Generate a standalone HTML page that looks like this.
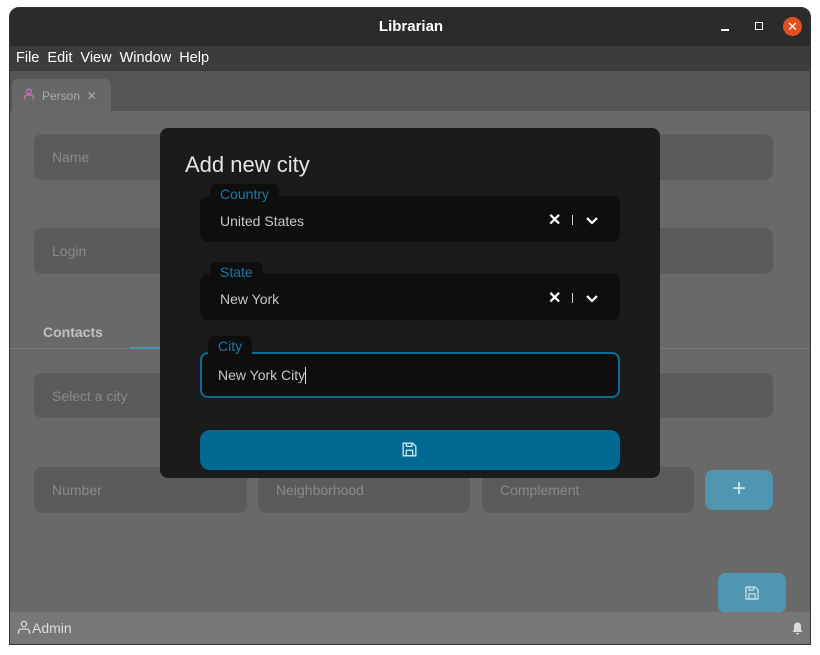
<!DOCTYPE html>
<html><head><style>
*{box-sizing:border-box;margin:0;padding:0}
body{width:820px;height:655px;background:#fff;font-family:"Liberation Sans",sans-serif;position:relative;overflow:hidden}
.a{position:absolute}
.win{left:9px;top:7px;width:802px;height:638px;background:#696969;border-radius:10px 10px 0 0;overflow:hidden;border:1px solid #333}
.fld{background:#5b5b5b;border-radius:8px;color:#8a8a8a;font-size:14px;padding-left:18px;display:flex;align-items:center}
.dfld{background:#0e0e0e;border-radius:8px;color:#c8c8c8;font-size:14px;padding-left:20px;display:flex;align-items:center}
.lab{background:#0e0e0e;border-radius:6px 6px 0 0;color:#1c78a6;font-size:14px;padding:2px 10px 0;z-index:2;line-height:16px}
</style></head><body>
<div class="a win">
 <div class="a" style="left:0;top:0;width:802px;height:38px;background:#2b2b2b"></div>
 <div class="a" style="left:0;top:10px;width:802px;text-align:center;color:#fff;font-weight:bold;font-size:15px">Librarian</div>
 <div class="a" style="left:711px;top:21px;width:8px;height:1.5px;background:#fff"></div>
 <div class="a" style="left:745px;top:14px;width:8px;height:8px;border:1.5px solid #fff"></div>
 <div class="a" style="left:773px;top:9px;width:19px;height:19px;border-radius:50%;background:#e2501e;color:#fff;font-size:13px;text-align:center;line-height:19px">✕</div>
 <div class="a" style="left:0;top:38px;width:802px;height:25px;background:#3c3c3c;color:#fff;font-size:14.5px;padding:4px 6px;word-spacing:4px">File Edit View Window Help</div>
 <div class="a" style="left:0;top:63px;width:802px;height:40px;background:#555"></div>
 <div class="a" style="left:2px;top:71px;width:99px;height:32px;background:#676767;border-radius:6px 6px 0 0;color:#aaa;font-size:12px;padding:10px 0 0 30px">Person&nbsp;&nbsp;✕</div>
 <svg class="a" style="left:13px;top:80px" width="12" height="12" viewBox="0 0 12 12" fill="none" stroke="#d36fc0" stroke-width="1.3"><circle cx="6" cy="3.5" r="2.3"/><path d="M1.5 11.5v-1.5a3 3 0 0 1 3-3h3a3 3 0 0 1 3 3v1.5"/></svg>
 <div class="a fld" style="left:24px;top:126px;width:739px;height:46px">Name</div>
 <div class="a fld" style="left:24px;top:220px;width:739px;height:46px">Login</div>
 <div class="a" style="left:33px;top:316px;color:#c0c0c0;font-size:14px;font-weight:bold">Contacts</div>
 <div class="a" style="left:0;top:340px;width:802px;height:1px;background:#7a7a7a"></div>
 <div class="a" style="left:120px;top:339px;width:40px;height:2px;background:#4a94b4"></div>
 <div class="a fld" style="left:24px;top:365px;width:739px;height:45px">Select a city</div>
 <div class="a fld" style="left:24px;top:459px;width:213px;height:46px">Number</div>
 <div class="a fld" style="left:248px;top:459px;width:212px;height:46px">Neighborhood</div>
 <div class="a fld" style="left:472px;top:459px;width:212px;height:46px">Complement</div>
 <div class="a" style="left:695px;top:462px;width:68px;height:40px;background:#5196b0;border-radius:8px;color:#cfe3ec;font-size:24px;text-align:center;line-height:38px">+</div>
 <div class="a" style="left:708px;top:565px;width:68px;height:40px;background:#5196b0;border-radius:8px"></div>
 <svg class="a" style="left:733px;top:576px" width="18" height="18" viewBox="0 0 24 24" fill="none" stroke="#cfe3ec" stroke-width="1.6"><path d="M6 4h10l4 4v12H4V4z"/><path d="M8 4v4h6V4"/><rect x="8" y="13" width="8" height="7"/></svg>
 <div class="a" style="left:0;top:604px;width:802px;height:34px;background:#777;color:#ddd;font-size:14px;padding:8px 0 0 22px">Admin</div>
 <svg class="a" style="left:7px;top:612px" width="14" height="15" viewBox="0 0 14 15" fill="none" stroke="#ddd" stroke-width="1.3"><circle cx="7" cy="4" r="2.6"/><path d="M1.5 14v-2a3 3 0 0 1 3-3h5a3 3 0 0 1 3 3v2"/></svg>
 <svg class="a" style="left:782px;top:614px" width="11" height="13" viewBox="0 0 11 13" fill="#ddd"><path d="M5.5 0.5c-2.2 0-3.5 1.7-3.5 3.8v3.5L.5 10h10L9 7.8V4.3C9 2.2 7.7.5 5.5.5zM4 11h3a1.5 1.5 0 0 1-3 0z"/></svg>
</div>
<div class="a" style="left:160px;top:128px;width:500px;height:350px;background:#1b1b1b;border-radius:8px">
 <div class="a" style="left:25px;top:24px;color:#e4e4e4;font-size:22px">Add new city</div>
 <div class="a dfld" style="left:40px;top:68px;width:420px;height:46px;padding-top:4px">United States</div>
 <div class="a lab" style="left:50px;top:56px;height:20px">Country</div>
 <div class="a dfld" style="left:40px;top:146px;width:420px;height:46px;padding-top:4px">New York</div>
 <div class="a lab" style="left:50px;top:134px;height:20px">State</div>
 <div class="a" style="left:388px;top:82px;color:#fff;font-size:16px;font-weight:bold">✕</div>
 <div class="a" style="left:412px;top:87px;width:1px;height:10px;background:#ccc"></div>
 <div class="a" style="left:388px;top:160px;color:#fff;font-size:16px;font-weight:bold">✕</div>
 <div class="a" style="left:412px;top:165px;width:1px;height:10px;background:#ccc"></div>
 <svg class="a" style="left:425px;top:88px" width="14" height="9" viewBox="0 0 14 9" fill="none" stroke="#fff" stroke-width="2.2"><path d="M2 2l5 5 5-5"/></svg>
 <svg class="a" style="left:425px;top:166px" width="14" height="9" viewBox="0 0 14 9" fill="none" stroke="#fff" stroke-width="2.2"><path d="M2 2l5 5 5-5"/></svg>
 <div class="a dfld" style="left:40px;top:224px;width:420px;height:46px;border:2px solid #0e6c93;padding-left:16px">New York City<span style="display:inline-block;width:1px;height:17px;background:#ddd"></span></div>
 <div class="a lab" style="left:48px;top:208px;height:18px;padding-top:2px">City</div>
 <div class="a" style="left:40px;top:302px;width:420px;height:40px;background:#016992;border-radius:10px"></div>
 <svg class="a" style="left:240px;top:312px" width="19" height="19" viewBox="0 0 24 24" fill="none" stroke="#cfe3ec" stroke-width="1.7"><path d="M4 4h12l4 4v12H4z"/><path d="M8 4v4h7V4"/><rect x="8" y="13" width="8" height="7"/></svg>
</div>
</body></html>
